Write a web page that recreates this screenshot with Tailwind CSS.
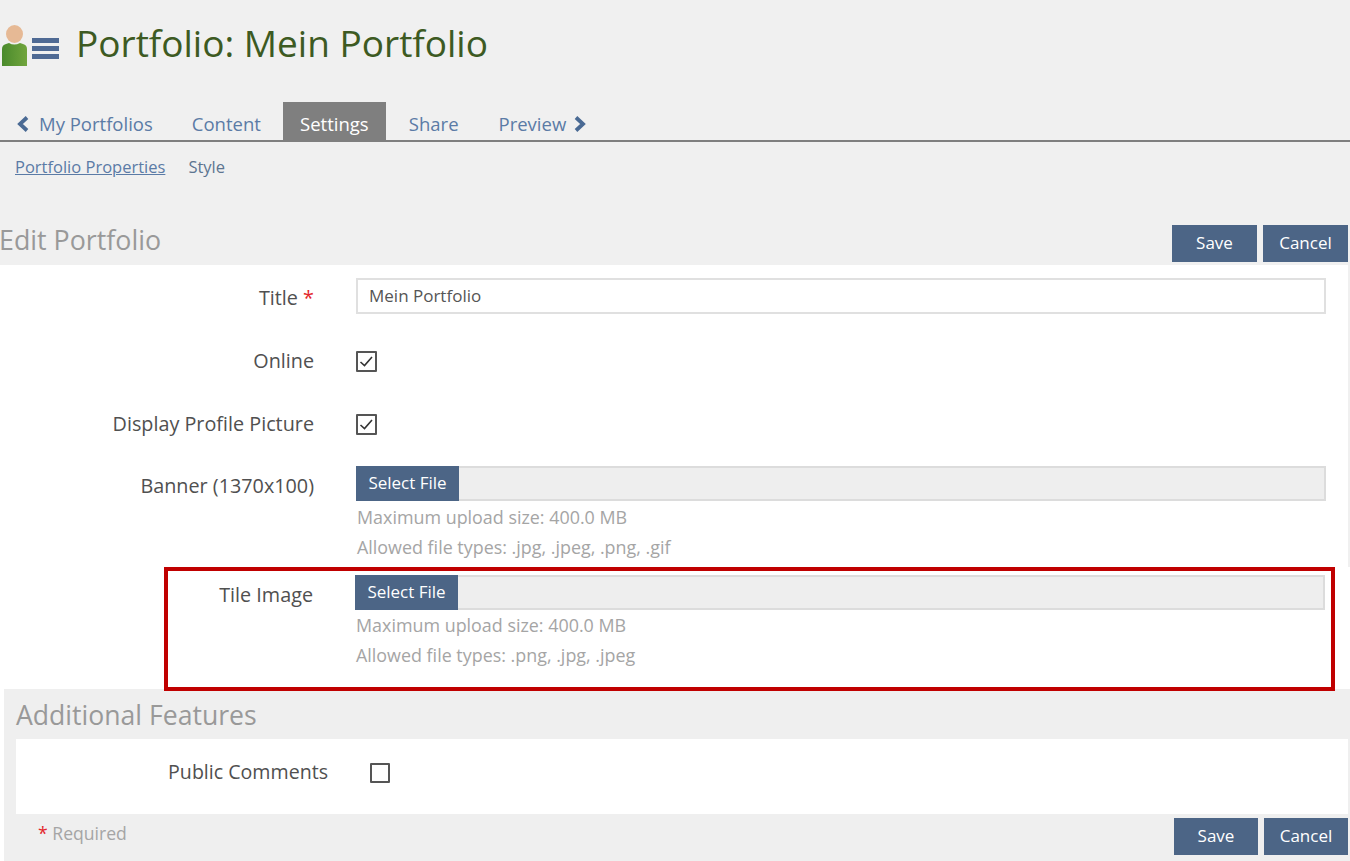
<!DOCTYPE html>
<html lang="de">
  <head>
    <meta charset="UTF-8" />
    <meta name="viewport" content="width=device-width, initial-scale=1.0" />
    <script src="https://cdn.jsdelivr.net/npm/@tailwindcss/browser@4"></script>
    <title>Edit Portfolio</title>
  </head>
  <body class="w-[1350px] h-[861px] overflow-hidden bg-white font-['Open_Sans',sans-serif]">
    <!-- top part, grey background -->
    <div class="bg-[#f0f0f0]">
      <header class="h-[102px] flex items-start">
        <svg class="mt-[25px] ml-[2px]" width="25" height="42" viewBox="0 0 25 42">
          <defs>
            <linearGradient id="shirt" x1="0" x2="1" y1="0" y2="0">
              <stop offset="0" stop-color="#4a8a2c" />
              <stop offset="1" stop-color="#71a53d" />
            </linearGradient>
          </defs>
          <ellipse cx="12.5" cy="9" rx="8.5" ry="9" fill="#e6b995" />
          <path d="M0 41V24q0-4 4-5l3-1q5 3 11 0l3 1q4 1 4 5V41Z" fill="url(#shirt)" />
        </svg>
        <div class="mt-[38px] ml-[5px] w-[27px] flex flex-col gap-[3px]">
          <div class="h-[5px] bg-[#4f6a94]"></div>
          <div class="h-[5px] bg-[#4f6a94]"></div>
          <div class="h-[5px] bg-[#4f6a94]"></div>
        </div>
        <h1 class="ml-[17px] mt-[18px] text-[37px] leading-[50px] text-[#3d5a22]">Portfolio: Mein Portfolio</h1>
      </header>

      <nav class="h-[40px] flex items-start border-b-2 border-[#7f7f7f] text-[18.5px] leading-[44px] text-[#5b7ba6]">
        <a class="ml-[16px] flex items-start">
          <svg class="mt-[13px]" width="14" height="18" viewBox="0 0 14 18"><polyline points="11,2.5 4,9 11,15.5" fill="none" stroke="#4a6a94" stroke-width="3.8" /></svg>
          <span class="ml-[9px]">My Portfolios</span>
        </a>
        <a class="ml-[39px]">Content</a>
        <a class="ml-[22px] w-[103px] h-[39px] text-center bg-[#7f7f7f] text-white">Settings</a>
        <a class="ml-[23px]">Share</a>
        <a class="ml-[40px] flex items-start">
          <span>Preview</span>
          <svg class="ml-[7px] mt-[13px]" width="14" height="18" viewBox="0 0 14 18"><polyline points="3,2.5 10,9 3,15.5" fill="none" stroke="#4a6a94" stroke-width="3.8" /></svg>
        </a>
      </nav>

      <div class="h-[50px] flex items-center pl-[15px] gap-[23px] text-[16.5px] text-[#5b7ba6]">
        <a class="underline">Portfolio Properties</a>
        <a class="text-[#5d7590]">Style</a>
      </div>

      <div class="h-[73px] flex justify-between items-start pt-[33px] pr-[2px]">
        <h2 class="-ml-[1px] -mt-[1px] text-[26.8px] leading-[32px] text-[#999999]">Edit Portfolio</h2>
        <div class="flex gap-[6px]">
          <button class="w-[85px] h-[37px] pb-[2px] bg-[#4c6586] text-white text-[17px]">Save</button>
          <button class="w-[85px] h-[37px] pb-[2px] bg-[#4c6586] text-white text-[17px]">Cancel</button>
        </div>
      </div>

      <form class="w-[1348px] h-[302px] bg-white text-[19.8px] text-[#505050] pt-[13px]">
        <div class="flex">
          <label class="w-[314px] text-right pt-[5px] leading-[30px]">Title <span class="text-[#e3262b]">*</span></label>
          <div class="ml-[42px] w-[970px] h-[36px] border-2 border-[#e0e0e0] pl-[11px] text-[17px] leading-[32px] text-[#555555]">Mein Portfolio</div>
        </div>
        <div class="flex mt-[37px]">
          <label class="w-[314px] text-right leading-[20px]">Online</label>
          <div class="ml-[42px] w-[21px] h-[21px] border-2 border-[#555555] rounded-[1px]">
            <svg width="17" height="17" viewBox="0 0 17 17"><polyline points="2.5,9 6.5,12.5 14,4" fill="none" stroke="#333333" stroke-width="1.6" /></svg>
          </div>
        </div>
        <div class="flex mt-[42px]">
          <label class="w-[314px] text-right leading-[20px]">Display Profile Picture</label>
          <div class="ml-[42px] w-[21px] h-[21px] border-2 border-[#555555] rounded-[1px]">
            <svg width="17" height="17" viewBox="0 0 17 17"><polyline points="2.5,9 6.5,12.5 14,4" fill="none" stroke="#333333" stroke-width="1.6" /></svg>
          </div>
        </div>
        <div class="flex mt-[31px]">
          <label class="w-[314px] text-right pt-[5px] leading-[30px]">Banner (1370x100)</label>
          <div class="ml-[42px] w-[970px]">
            <div class="h-[35px] bg-[#eeeeee] border-2 border-l-0 border-[#dcdcdc] flex">
              <span class="w-[103px] h-[35px] -mt-[2px] bg-[#4c6586] text-white text-center text-[17px] leading-[33px]">Select File</span>
            </div>
            <p class="mt-[1px] ml-[1px] text-[17.9px] leading-[30px] text-[#a5a5a5]">Maximum upload size: 400.0 MB</p>
            <p class="ml-[1px] text-[17.9px] leading-[30px] text-[#a5a5a5]">Allowed file types: .jpg, .jpeg, .png, .gif</p>
          </div>
        </div>
      </form>
    </div>

    <!-- highlighted row -->
    <div class="relative z-10 ml-[164px] w-[1171px] h-[124px] -mb-[2px] border-4 border-[#c00000] bg-white pt-[4px] flex text-[19.8px] text-[#505050]">
      <label class="w-[145px] text-right pt-[5px] leading-[30px]">Tile Image</label>
      <div class="ml-[42px] w-[970px]">
        <div class="h-[35px] bg-[#eeeeee] border-2 border-l-0 border-[#dcdcdc] flex">
          <span class="w-[103px] h-[35px] -mt-[2px] bg-[#4c6586] text-white text-center text-[17px] leading-[33px]">Select File</span>
        </div>
        <p class="ml-[1px] text-[17.9px] leading-[30px] text-[#a5a5a5]">Maximum upload size: 400.0 MB</p>
        <p class="ml-[1px] text-[17.9px] leading-[30px] text-[#a5a5a5]">Allowed file types: .png, .jpg, .jpeg</p>
      </div>
    </div>

    <!-- additional features -->
    <section class="ml-[4px] h-[172px] bg-[#efefef]">
      <h2 class="h-[50px] pl-[12px] text-[26.6px] leading-[52px] text-[#999999]">Additional Features</h2>
      <div class="ml-[12px] w-[1332px] h-[75px] bg-white flex pt-[24px] text-[19.6px] text-[#505050]">
        <label class="w-[312px] text-right leading-[18px]">Public Comments</label>
        <div class="ml-[42px] w-[20px] h-[20px] border-2 border-[#555555] rounded-[1px]"></div>
      </div>
      <div class="flex justify-between items-start pr-[2px]">
        <p class="ml-[34px] mt-[6px] text-[17.6px] leading-[26px] text-[#a5a5a5]"><span class="text-[#e3262b]">*</span> Required</p>
        <div class="flex gap-[6px] mt-[4px]">
          <button class="w-[84px] h-[37px] pb-[2px] bg-[#4c6586] text-white text-[17px]">Save</button>
          <button class="w-[84px] h-[37px] pb-[2px] bg-[#4c6586] text-white text-[17px]">Cancel</button>
        </div>
      </div>
    </section>
  </body>
</html>
